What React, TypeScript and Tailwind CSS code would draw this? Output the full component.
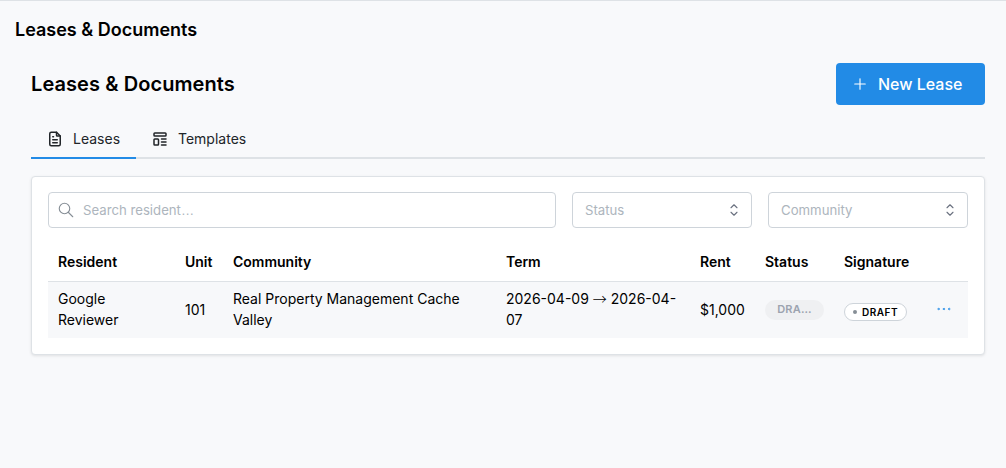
import { TbFileText, TbTemplate, TbPlus, TbSearch, TbSelector, TbDots } from 'react-icons/tb'

const HEADERS = [
  { label: 'Resident', width: 'w-[127px]' },
  { label: 'Unit', width: 'w-[48px]' },
  { label: 'Community', width: 'w-[273px]' },
  { label: 'Term', width: 'w-[194px]' },
  { label: 'Rent', width: 'w-[65px]' },
  { label: 'Status', width: 'w-[79px]' },
  { label: 'Signature', width: 'w-[93px]' },
  { label: '', width: 'w-[41px]' },
]

function FilterSelect({ label, width }: { label: string; width: string }) {
  return (
    <div className={`${width} h-9 flex items-center justify-between pl-3 pr-[8px] bg-white border border-[#ced4da] rounded text-[13.2px] text-[#adb5bd]`}>
      <span className="pt-[1px]">{label}</span>
      <TbSelector className="w-[18px] h-[18px] text-[#6b7280]" strokeWidth={1.5} />
    </div>
  )
}

export default function App() {
  return (
    <div className="w-[1006px] h-[468px] overflow-hidden bg-[#f8f9fb] border-t border-[#dee2e6] text-black font-['Inter',sans-serif]">
      <h1 className="pl-[15px] pt-[18px] text-[18px] leading-[22px] font-semibold">Leases &amp; Documents</h1>

      <div className="ml-[31px] mr-[21px] mt-[22px]">
        <div className="flex items-center justify-between h-[42px]">
          <h2 className="text-[20px] leading-[26px] font-semibold tracking-[0.08px]">Leases &amp; Documents</h2>
          <button className="w-[149px] h-[42px] flex items-center gap-[9px] pl-[15px] bg-[#228be6] rounded text-white text-base font-medium">
            <TbPlus className="w-[18px] h-[18px]" strokeWidth={1.5} />
            New Lease
          </button>
        </div>

        {/* tabs */}
        <div className="flex mt-4 h-[38px] border-b-2 border-[#dee2e6]">
          <div className="w-[105px] h-[38px] flex items-center gap-[9px] pl-[15px] border-b-2 border-[#228be6] text-sm text-[#212529]">
            <TbFileText className="w-[18px] h-[18px]" />
            Leases
          </div>
          <div className="h-[38px] flex items-center gap-[9px] pl-[15px] pb-[2px] text-sm text-[#212529]">
            <TbTemplate className="w-[18px] h-[18px]" />
            Templates
          </div>
        </div>

        {/* card */}
        <div className="mt-[17px] h-[179px] px-4 py-[15px] bg-white border border-[#dee2e6] rounded shadow-[0_1px_3px_rgba(0,0,0,0.1)]">
          <div className="flex gap-4">
            <div className="w-[508px] h-9 flex items-center gap-[8px] pl-[8px] bg-white border border-[#ced4da] rounded text-[13.2px] text-[#adb5bd]">
              <TbSearch className="w-[18px] h-[18px] text-[#868e96]" strokeWidth={1.5} />
              <span className="pt-[1px]">Search resident<span className="font-['Liberation_Sans',sans-serif]">…</span></span>
            </div>
            <FilterSelect label="Status" width="w-[180px]" />
            <FilterSelect label="Community" width="w-[200px]" />
          </div>

          <table className="mt-4 w-[920px] table-fixed border-collapse text-sm">
            <thead>
              <tr className="h-[37px] border-b border-[#dee2e6]">
                {HEADERS.map((h) => (
                  <th key={h.label} className={`${h.width} px-[10px] text-left font-semibold`}>{h.label}</th>
                ))}
              </tr>
            </thead>
            <tbody>
              <tr className="h-[57px] bg-[#f7f8fa] leading-[21px]">
                <td className="px-[10px] pb-[1px]">Google Reviewer</td>
                <td className="px-[10px]">101</td>
                <td className="px-[10px] pb-[1px]">Real Property Management Cache Valley</td>
                <td className="px-[10px] pb-[1px]">2026-04-09 <span className="font-['Noto_Sans_CJK_JP',sans-serif] font-light">→</span> 2026-04-07</td>
                <td className="px-[10px]">$1,000</td>
                <td className="px-[10px]">
                  <span className="w-[59px] h-5 flex items-center justify-center bg-[#eff0f2] rounded-full text-[11px] font-semibold tracking-[0.25px] text-[#9ca3af]">DRA…</span>
                </td>
                <td className="px-[10px]">
                  <span className="w-[63px] h-[18px] mt-[5px] flex items-center justify-center gap-[5px] bg-white border border-[#ced4da] rounded-full text-[10px] font-semibold tracking-[0.5px]">
                    <span className="w-1 h-1 rounded-full bg-[#868e96]" />
                    DRAFT
                  </span>
                </td>
                <td className="pl-[8px]">
                  <TbDots className="w-[18px] h-[18px] -mt-[1px] text-[#228be6]" strokeWidth={1.25} />
                </td>
              </tr>
            </tbody>
          </table>
        </div>
      </div>
    </div>
  )
}
